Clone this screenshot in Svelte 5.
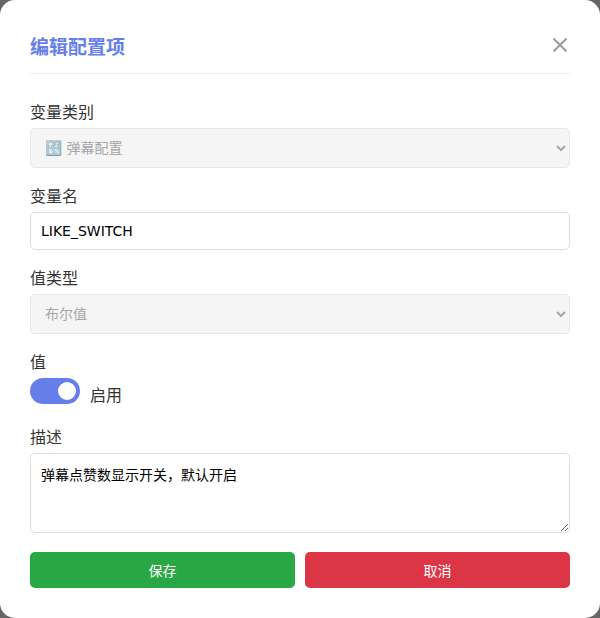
<script>
	let value = $state(true);
</script>

<div class="modal">
	<div class="header">
		<h2>编辑配置项</h2>
		<button class="close" aria-label="关闭">
			<svg width="16" height="16" viewBox="0 0 16 16"><path d="M1.5 1.5 14.5 14.5M14.5 1.5 1.5 14.5" /></svg>
		</button>
	</div>

	<div class="group">
		<label for="cat">变量类别</label>
		<select id="cat" disabled>
			<option>🔣 弹幕配置</option>
		</select>
	</div>

	<div class="group">
		<label for="name">变量名</label>
		<input id="name" type="text" value="LIKE_SWITCH" />
	</div>

	<div class="group">
		<label for="type">值类型</label>
		<select id="type" disabled>
			<option>布尔值</option>
		</select>
	</div>

	<div class="group">
		<label for="val">值</label>
		<div class="switch-row">
			<label class="switch">
				<input id="val" type="checkbox" bind:checked={value} />
				<span class="slider"></span>
			</label>
			<span class="switch-text">{value ? '启用' : '禁用'}</span>
		</div>
	</div>

	<div class="group">
		<label for="desc">描述</label>
		<textarea id="desc">弹幕点赞数显示开关，默认开启</textarea>
	</div>

	<div class="actions">
		<button class="btn save">保存</button>
		<button class="btn cancel">取消</button>
	</div>
</div>

<style>
	:global(body) {
		background: #666;
		font-family: "DejaVu Sans", "Noto Sans CJK SC", sans-serif;
	}

	.modal {
		box-sizing: border-box;
		width: 600px;
		height: 618px;
		padding: 30px;
		background: #fff;
		border-radius: 15px;
	}

	.header {
		display: flex;
		justify-content: space-between;
		align-items: center;
		height: 32px;
		padding-bottom: 11px;
		margin-bottom: 25px;
		border-bottom: 1px solid #eee;
	}

	h2 {
		margin: 0 0 2px;
		font-size: 19px;
		font-weight: bold;
		color: #667eea;
	}

	.close {
		display: flex;
		padding: 0;
		margin-right: 2px;
		margin-bottom: 2px;
		border: none;
		background: none;
	}

	.close path {
		stroke: #999;
		stroke-width: 1.8;
		fill: none;
	}

	.group {
		margin-bottom: 15px;
	}

	label {
		display: block;
		margin-bottom: 5px;
		font-size: 16px;
		color: #333;
	}

	select,
	input[type="text"],
	textarea {
		display: block;
		box-sizing: border-box;
		width: 100%;
		padding: 10px;
		font-family: inherit;
		font-size: 14px;
		border: 1px solid #ddd;
		border-radius: 5px;
		background: #fff;
	}

	select:disabled {
		background: #f2f2f2;
		height: 40px;
	}

	textarea {
		height: 80px;
		resize: vertical;
	}

	.switch-row {
		display: flex;
		align-items: flex-start;
		gap: 10px;
		height: 31px;
	}

	.switch {
		position: relative;
		display: inline-block;
		width: 50px;
		height: 26px;
		margin: 0;
	}

	.switch input {
		width: 0;
		height: 0;
		opacity: 0;
	}

	.slider {
		position: absolute;
		inset: 0;
		border-radius: 26px;
		background: #ccc;
	}

	.slider::before {
		content: "";
		position: absolute;
		top: 4px;
		left: 4px;
		width: 18px;
		height: 18px;
		border-radius: 50%;
		background: #fff;
	}

	input:checked + .slider {
		background: #667eea;
	}

	input:checked + .slider::before {
		transform: translateX(24px);
	}

	.switch-text {
		margin-top: 4px;
		font-size: 16px;
		color: #333;
	}

	.actions {
		display: flex;
		gap: 10px;
		margin-top: 19px;
	}

	.btn {
		flex: 1;
		height: 36px;
		border: none;
		border-radius: 5px;
		font-family: inherit;
		font-size: 14px;
		color: #fff;
	}

	.save {
		background: #28a745;
	}

	.cancel {
		background: #dc3545;
	}
</style>
